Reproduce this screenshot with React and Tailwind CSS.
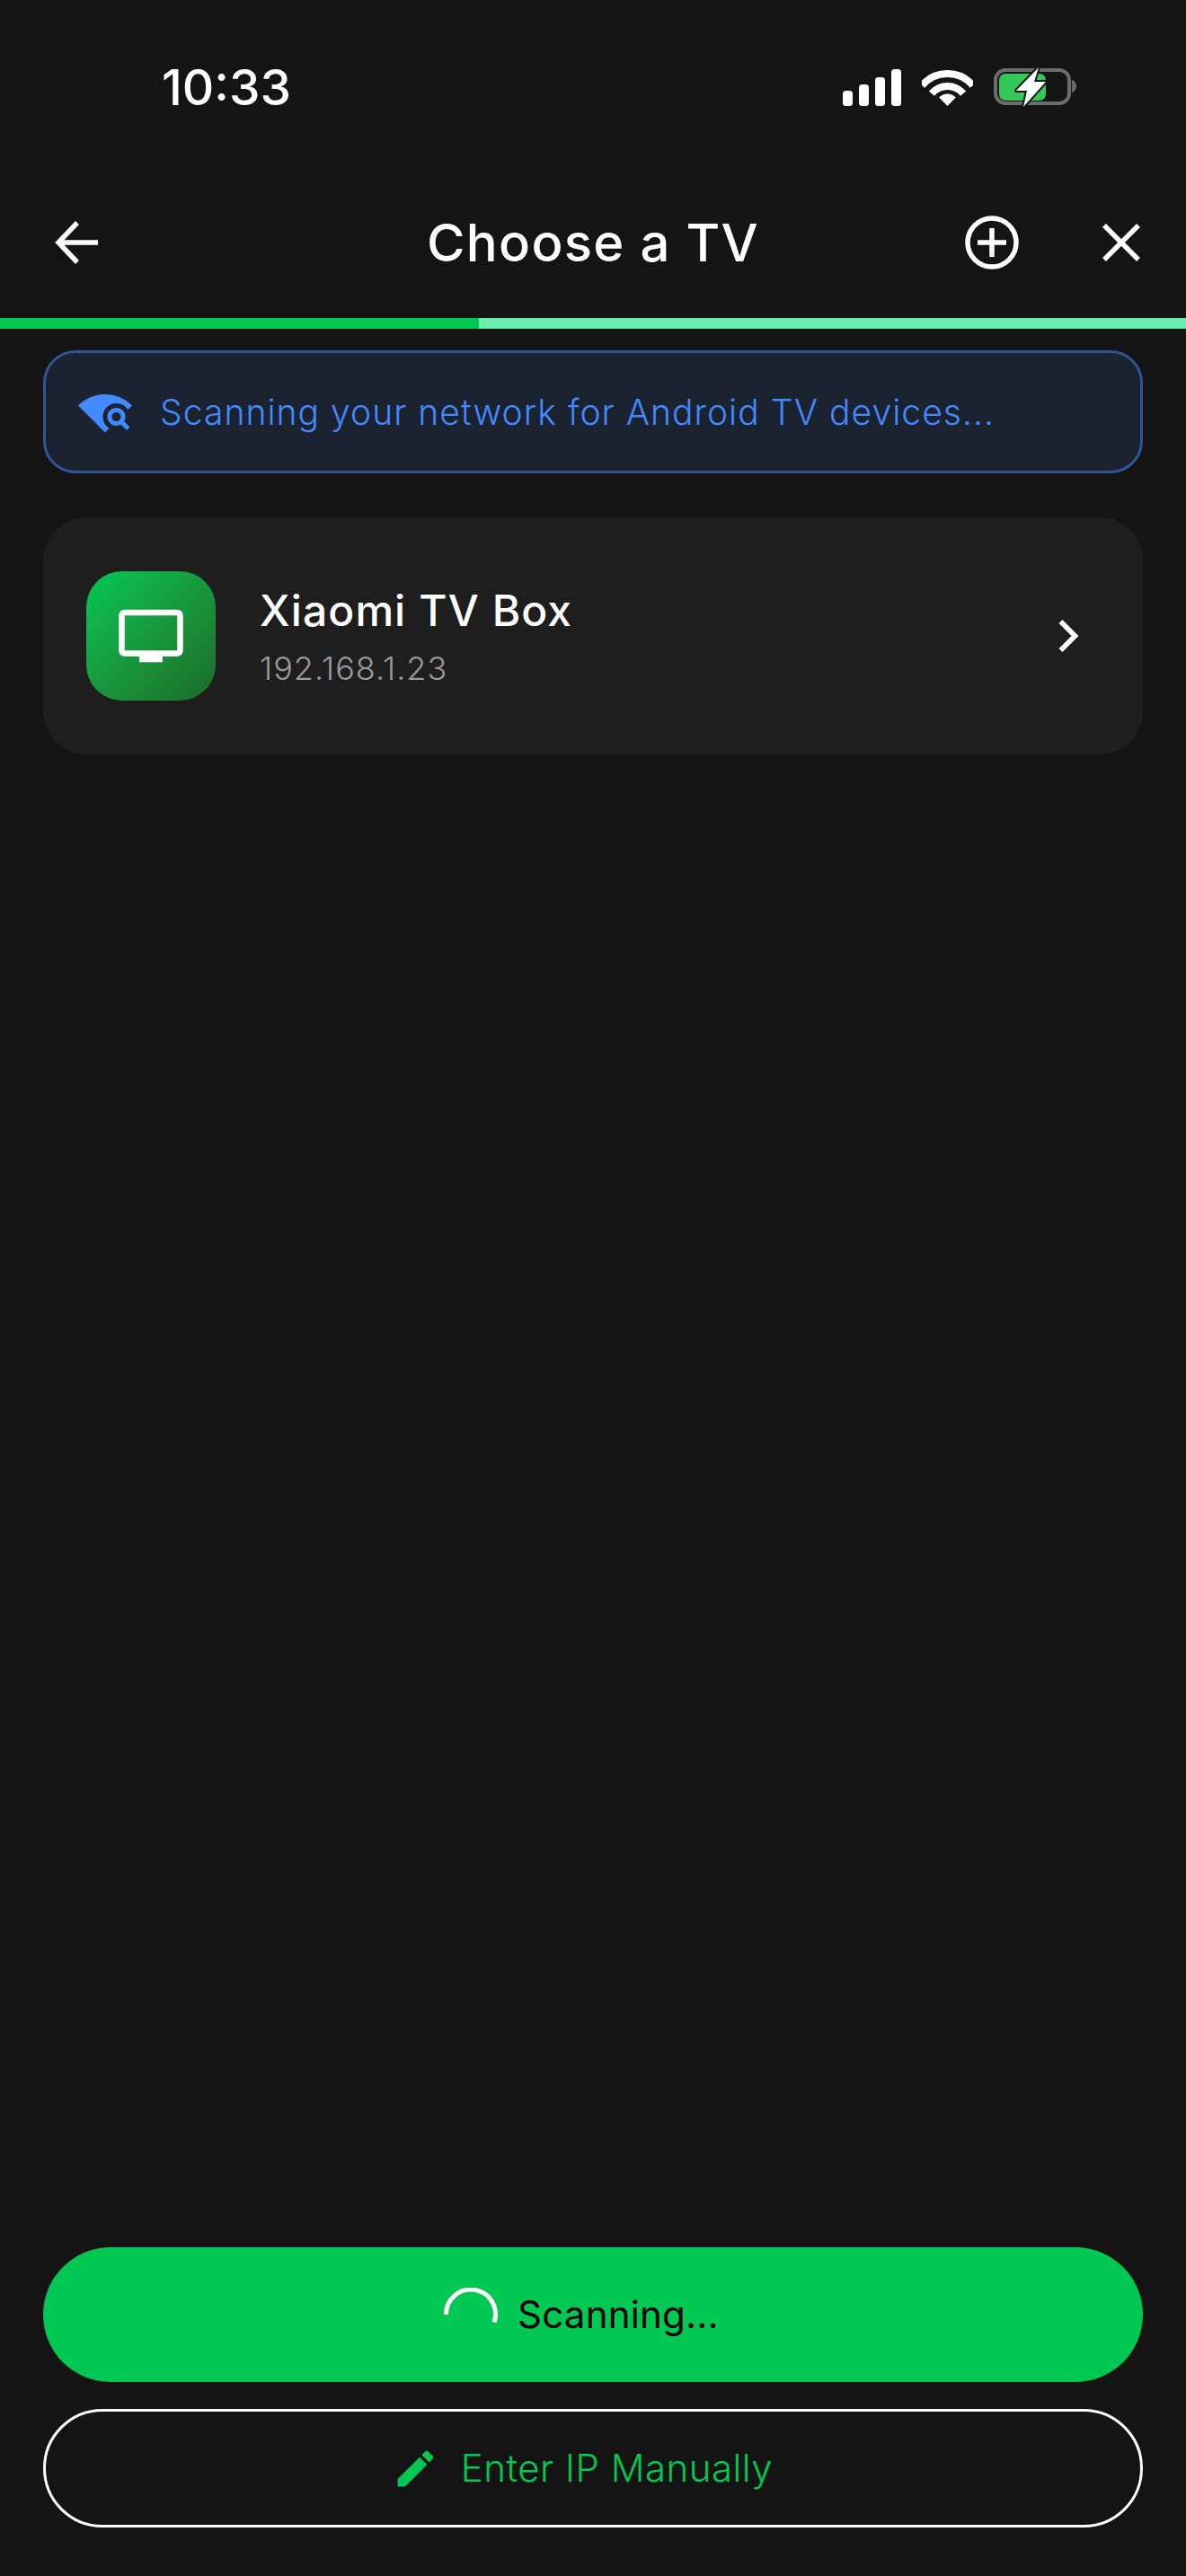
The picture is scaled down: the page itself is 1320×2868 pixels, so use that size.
import React from "react";
import { MdWifiFind, MdOutlineTv, MdEdit } from "react-icons/md";

function Signal() {
  return (
    <svg width="65" height="41" viewBox="0 0 65 41" fill="#fff">
      <rect x="0" y="24" width="11" height="17" rx="3.5" />
      <rect x="18" y="17" width="11" height="24" rx="3.5" />
      <rect x="36" y="9" width="11" height="32" rx="3.5" />
      <rect x="54" y="0" width="11" height="41" rx="3.5" />
    </svg>
  );
}

function Wifi() {
  return (
    <svg width="57" height="41" viewBox="0 0 57 41" fill="none">
      <path d="M0.2 18.2A37 37 0 0 1 56.8 18.2" stroke="#fff" strokeWidth="8" />
      <path d="M10.9 27.2A23 23 0 0 1 46.1 27.2" stroke="#fff" strokeWidth="8" />
      <path d="M28.5 41L19.2 31.5A13 13 0 0 1 37.8 31.5Z" fill="#fff" />
    </svg>
  );
}

function Battery() {
  return (
    <svg width="92" height="42" viewBox="0 0 92 42" fill="none" className="overflow-visible">
      <rect x="2" y="2" width="82" height="37" rx="11" stroke="#6c6c6c" strokeWidth="4" />
      <path d="M87 13C90 14 92 17 92 20S90 26 87 27Z" fill="#6c6c6c" />
      <rect x="6" y="6" width="52" height="30" rx="7" fill="#34c759" />
      <path
        d="M50 -1L25 25H37L33 43L58 15H45Z"
        fill="#fff"
        stroke="#141414"
        strokeWidth="4"
        strokeLinejoin="round"
        paintOrder="stroke"
      />
    </svg>
  );
}

function ArrowLeft() {
  return (
    <svg width="48" height="48" viewBox="0 0 48 48" fill="none" stroke="#fff" strokeWidth="5.500">
      <path d="M48 24H4" />
      <path d="M25 2L4 24L25 46" />
    </svg>
  );
}

function PlusCircle() {
  return (
    <svg width="60" height="60" viewBox="0 0 60 60" fill="none" stroke="#fff" strokeWidth="5.500">
      <circle cx="30" cy="30" r="27" />
      <path d="M14 30H46M30 14V46" />
    </svg>
  );
}

function Close() {
  return (
    <svg width="42" height="42" viewBox="0 0 42 42" fill="none" stroke="#fff" strokeWidth="5.500">
      <path d="M2 2L40 40M40 2L2 40" />
    </svg>
  );
}

function Chevron() {
  return (
    <svg width="22" height="36" viewBox="0 0 22 36" fill="none" stroke="#fff" strokeWidth="5.500">
      <path d="M2.500 2L18.500 18L2.500 34" />
    </svg>
  );
}

function Spinner() {
  return (
    <svg width="60" height="60" viewBox="0 0 60 60" fill="none">
      <path d="M2.500 30A27.500 27.500 0 1 1 56 38.500" stroke="#fff" strokeWidth="5" />
    </svg>
  );
}

export default function App() {
  return (
    <div className="flex h-[2868px] w-[1320px] flex-col bg-[#141414] font-[Inter,sans-serif] text-white">
      <div className="flex h-[194px] shrink-0 items-center justify-between pl-[180px] pr-[122px]">
        <span className="text-[55px] font-medium leading-none">10:33</span>
        <div className="flex items-center gap-[23px]">
          <Signal />
          <Wifi />
          <Battery />
        </div>
      </div>

      <div className="grid h-[152px] shrink-0 grid-cols-[1fr_auto_1fr] items-center">
        <div className="pl-[61px]">
          <ArrowLeft />
        </div>
        <h1 className="text-[58px] font-medium leading-none tracking-[1.300px]">Choose a TV</h1>
        <div className="flex items-center justify-end gap-[93px] pr-[51px]">
          <PlusCircle />
          <Close />
        </div>
      </div>

      <div className="mt-2 flex h-3 shrink-0">
        <div className="w-[533px] bg-[#00c853]" />
        <div className="flex-1 bg-[#69f0ae]" />
      </div>

      <main className="flex flex-1 flex-col px-12 pt-6">
        <div className="flex h-[137px] items-center gap-[31px] rounded-[36px] border-[3px] border-[#2f5596] bg-[#1b2330] pl-9">
          <MdWifiFind size={60} color="#448aff" className="shrink-0" />
          <span className="text-[39px] leading-none tracking-[1.050px] text-[#448aff] [font-weight:350]">
            Scanning your network for Android TV devices...
          </span>
        </div>

        <div className="mt-[49px] flex h-[264px] items-center rounded-[48px] bg-[#1e1e1e] pl-12 pr-[72px]">
          <div className="flex h-36 w-36 shrink-0 items-center justify-center rounded-[40px] bg-gradient-to-br from-[#00c853] to-[#1b6b2a]">
            <MdOutlineTv size={78} color="#fff" />
          </div>
          <div className="ml-[49px] flex flex-1 flex-col">
            <span className="text-[48px] font-medium leading-[58px] tracking-[1.100px]">Xiaomi TV Box</span>
            <span className="mt-[13px] text-[36px] font-light leading-[44px] tracking-[1px] text-[#9a9a9a]">192.168.1.23</span>
          </div>
          <Chevron />
        </div>
      </main>

      <footer className="flex shrink-0 flex-col gap-[30px] px-12 pb-[54px]">
        <div className="flex h-[150px] items-center justify-center gap-[22px] rounded-full bg-[#00c853] pr-[26px]">
          <Spinner />
          <span className="text-[42px] leading-none tracking-[0.200px] text-black">Scanning...</span>
        </div>
        <div className="flex h-[132px] items-center justify-center gap-6 rounded-full border-[3px] border-white pr-[24px]">
          <MdEdit size={53} color="#00c853" />
          <span className="text-[42px] leading-none tracking-[0.500px] text-[#00c853] [font-weight:350]">Enter IP Manually</span>
        </div>
      </footer>
    </div>
  );
}
